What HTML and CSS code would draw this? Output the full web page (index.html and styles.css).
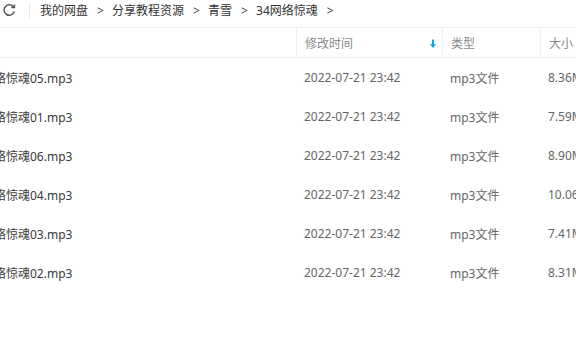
FILE: index.html
```html
<!DOCTYPE html>
<html>
<head>
<meta charset="utf-8">
<link rel="stylesheet" href="styles.css">
</head>
<body>
<div class="topbar">
  <div class="refresh">
    <svg width="14" height="14" viewBox="0 0 14 14"><path d="M11.6 4.2 A5.2 5.2 0 1 0 12.2 8.6" fill="none" stroke="#555" stroke-width="1.5"/><path d="M9.2 4.6 L12.4 4.6 L12.4 1.4" fill="none" stroke="#555" stroke-width="1.5"/></svg>
  </div>
  <div class="vdiv"></div>
  <div class="crumbs">
    <span>我的网盘</span><span class="sep">&gt;</span><span>分享教程资源</span><span class="sep">&gt;</span><span>青雪</span><span class="sep">&gt;</span><span>34网络惊魂</span><span class="sep">&gt;</span>
  </div>
</div>
<div class="head">
  <div class="c-name"></div>
  <div class="c-date hcell">修改时间<svg class="arrow" width="8" height="10" viewBox="0 0 8 10"><path d="M4 0.5 V8" stroke="#1a9cf0" stroke-width="2"/><path d="M0.8 5.2 L4 9 L7.2 5.2 Z" fill="#1a9cf0"/></svg></div>
  <div class="c-type hcell">类型</div>
  <div class="c-size hcell">大小</div>
</div>
<div class="list">
  <div class="row"><div class="c-name"><span class="fname">网络惊魂05.mp3</span></div><div class="c-date">2022-07-21 23:42</div><div class="c-type">mp3文件</div><div class="c-size">8.36MB</div></div>
  <div class="row"><div class="c-name"><span class="fname">网络惊魂01.mp3</span></div><div class="c-date">2022-07-21 23:42</div><div class="c-type">mp3文件</div><div class="c-size">7.59MB</div></div>
  <div class="row"><div class="c-name"><span class="fname">网络惊魂06.mp3</span></div><div class="c-date">2022-07-21 23:42</div><div class="c-type">mp3文件</div><div class="c-size">8.90MB</div></div>
  <div class="row"><div class="c-name"><span class="fname">网络惊魂04.mp3</span></div><div class="c-date">2022-07-21 23:42</div><div class="c-type">mp3文件</div><div class="c-size">10.06MB</div></div>
  <div class="row"><div class="c-name"><span class="fname">网络惊魂03.mp3</span></div><div class="c-date">2022-07-21 23:42</div><div class="c-type">mp3文件</div><div class="c-size">7.41MB</div></div>
  <div class="row"><div class="c-name"><span class="fname">网络惊魂02.mp3</span></div><div class="c-date">2022-07-21 23:42</div><div class="c-type">mp3文件</div><div class="c-size">8.31MB</div></div>
</div>
</body>
</html>
```
FILE: styles.css
```css
html, body {
  margin: 0;
  padding: 0;
  background: #fff;
  width: 576px;
  height: 356px;
  overflow: hidden;
  font-family: "Noto Sans", "Noto Sans CJK SC", sans-serif;
  font-size: 12px;
}
.topbar {
  display: flex;
  align-items: center;
  height: 20px;
  white-space: nowrap;
}
.refresh {
  width: 18px;
  padding-left: 2px;
  display: flex;
  align-items: center;
}
.vdiv {
  width: 1px;
  height: 15px;
  background: #e6e6e6;
  margin-left: 9px;
  margin-right: 10px;
}
.crumbs {
  color: #333;
  display: flex;
  align-items: center;
}
.sep {
  width: 7px;
  margin: 0 8px 0 9px;
  color: #444;
}
.head {
  margin-top: 7px;
  height: 29px;
  border-top: 1px solid #f0f0f0;
  border-bottom: 1px solid #eeeeee;
  display: flex;
  color: #8a8a8a;
}
.hcell {
  border-left: 1px solid #eeeeee;
  display: flex;
  align-items: center;
  position: relative;
}
.arrow {
  position: absolute;
  left: 132px;
  top: 11px;
}
.c-name {
  width: 296px;
  flex: none;
  overflow: hidden;
  white-space: nowrap;
}
.c-date {
  width: 146px;
  flex: none;
  padding-left: 8px;
  box-sizing: border-box;
}
.c-type {
  width: 98px;
  flex: none;
  padding-left: 8px;
  box-sizing: border-box;
}
.c-size {
  flex: 1;
  padding-left: 8px;
  box-sizing: border-box;
  white-space: nowrap;
  overflow: hidden;
}
.row {
  display: flex;
  align-items: center;
  height: 39px;
  color: #666;
}
.fname {
  display: inline-block;
  margin-left: -18px;
  color: #3a3a3a;
}
```
